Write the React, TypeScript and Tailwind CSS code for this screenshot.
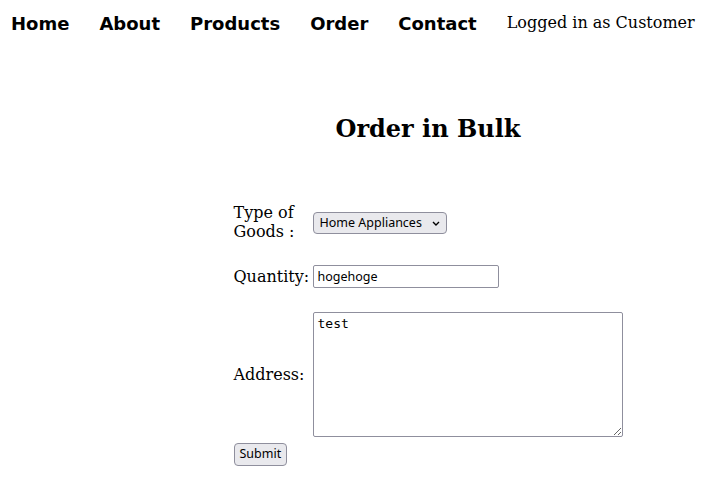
import React from "react";

export default function App() {
  const serif = "font-['DejaVu_Serif',serif]";
  const ctrl = "font-['Noto_Sans',sans-serif] text-[12.5px] text-black";
  return (
    <div className={`min-h-[495px] bg-white text-black ${serif}`}>
      <nav className="flex items-center h-[46px] pl-[11px]">
        <div className="flex gap-[30px] font-['DejaVu_Sans',sans-serif] font-bold text-[18px]">
          <span>Home</span>
          <span>About</span>
          <span>Products</span>
          <span>Order</span>
          <span>Contact</span>
        </div>
        <span className="ml-[30px] text-[16px]">Logged in as Customer</span>
      </nav>
      <div className="ml-[128px] flex flex-col items-center">
        <h2 className="mt-[67px] pl-[1px] text-[24px] font-bold leading-[32px]">Order in Bulk</h2>
        <form className="mt-[58px] flex flex-col">
          <div className="grid grid-cols-[76px_auto] gap-x-[4px] items-center">
            <label className="text-[16px] leading-[19px] pl-[1px] pr-[4px]">Type of Goods :</label>
            <div>
              <select
                defaultValue="ha"
                className={`${ctrl} h-[22px] w-[134px] pl-[6px] border border-[#8f8f9d] rounded-[4px] bg-[#e9e9ed] appearance-none`}
                style={{
                  backgroundImage:
                    "url(\"data:image/svg+xml;utf8,<svg xmlns='http://www.w3.org/2000/svg' width='8' height='5' viewBox='0 0 8 5'><path d='M1 1l3 3 3-3' fill='none' stroke='black' stroke-width='1.4'/></svg>\")",
                  backgroundRepeat: "no-repeat",
                  backgroundPosition: "right 6px center",
                }}
              >
                <option value="ha">Home Appliances</option>
              </select>
            </div>
            <label className="mt-[23px] pl-[1px] text-[16px] leading-[19px]">Quantity:</label>
            <div className="mt-[23px]">
              <input
                defaultValue="hogehoge"
                className={`${ctrl} h-[23px] w-[186px] px-[4px] border border-[#8f8f9d] rounded-[2px] bg-white`}
              />
            </div>
            <label className="mt-[24px] pl-[1px] text-[16px] leading-[19px]">Address:</label>
            <div className="mt-[24px] flex">
              <textarea
                defaultValue="test"
                className="font-['DejaVu_Sans_Mono',monospace] text-[13px] leading-[16px] w-[310px] h-[125px] px-[4px] py-[3px] border border-[#8f8f9d] rounded-[2px] bg-white text-black"
              />
            </div>
          </div>
          <div className="mt-[6px] flex">
            <button
              type="button"
              className={`${ctrl} h-[23px] px-[5px] ml-[1px] border border-[#8f8f9d] rounded-[4px] bg-[#e9e9ed]`}
            >
              Submit
            </button>
          </div>
        </form>
      </div>
    </div>
  );
}
